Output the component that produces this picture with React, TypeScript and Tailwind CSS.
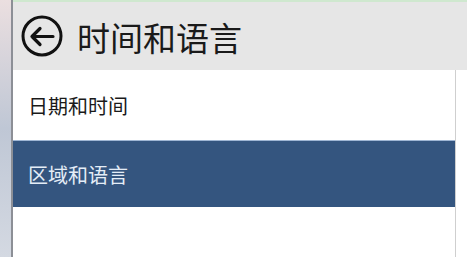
import React from "react";

export default function App() {
  return (
    <div className="flex h-[257px] w-[467px] overflow-hidden bg-white" style={{ fontFamily: '"Noto Sans CJK SC", "Noto Sans", sans-serif' }}>
      <div className="w-[11px] shrink-0 bg-gradient-to-b from-[#ebdfe0] via-[#bfc7d5] to-[#d4d9e2]" />
      <div className="w-[2px] shrink-0 bg-[#8c8f96]" />
      <div className="flex flex-1 flex-col">
        <div className="h-[2px] bg-[#cfe8cf]" />
        <div className="flex h-[68px] items-center gap-[14px] bg-[#e6e6e6] pl-[8px]">
          <svg width="42" height="42" viewBox="0 0 42 42" className="shrink-0">
            <circle cx="21" cy="21" r="19" fill="none" stroke="#111" strokeWidth="3" />
            <path d="M11 21.5H32M11 21.5L19 13.5M11 21.5L19 29.5" fill="none" stroke="#111" strokeWidth="3.2" strokeLinecap="round" strokeLinejoin="round" />
          </svg>
          <span className="pt-[2px] text-[33px] leading-none text-[#1a1a1a]">时间和语言</span>
        </div>
        <div className="flex flex-1">
          <div className="flex w-[442px] flex-col">
            <div className="flex h-[70px] items-center pl-[15px] pt-[2px] text-[20px] text-[#1a1a1a]">日期和时间</div>
            <div className="flex h-[67px] items-center border-t border-[#9fb6d4] bg-[#34557f] pl-[15px] pt-[2px] text-[20px] text-[#e4edf7]">区域和语言</div>
          </div>
          <div className="w-[1px] bg-[#cfcfcf]" />
          <div className="flex-1 bg-white" />
        </div>
      </div>
    </div>
  );
}
